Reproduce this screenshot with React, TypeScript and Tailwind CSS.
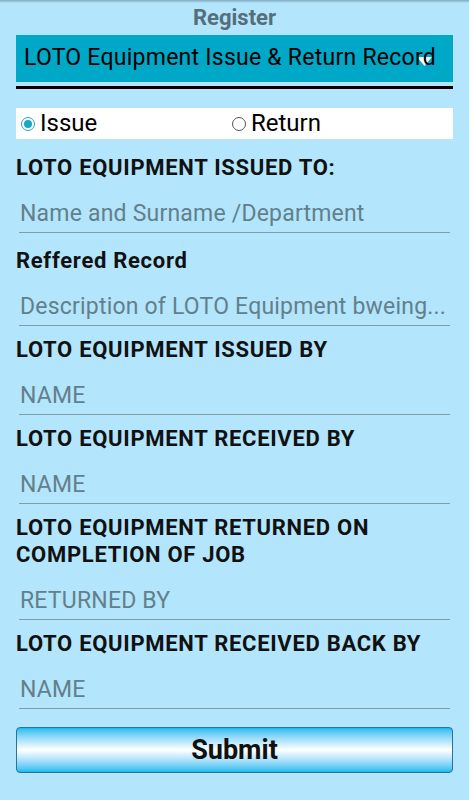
import { useState } from 'react'

const fields = [
  { label: ['LOTO EQUIPMENT ISSUED TO:'], placeholder: 'Name and Surname /Department', mt: 'mt-0' },
  { label: ['Reffered Record'], placeholder: 'Description of LOTO Equipment bweing...', mt: 'mt-[14px]' },
  { label: ['LOTO EQUIPMENT ISSUED BY'], placeholder: 'NAME', mt: 'mt-[10px]' },
  { label: ['LOTO EQUIPMENT RECEIVED BY'], placeholder: 'NAME', mt: 'mt-[10px]' },
  { label: ['LOTO EQUIPMENT RETURNED ON', 'COMPLETION OF JOB'], placeholder: 'RETURNED BY', mt: 'mt-[10px]' },
  { label: ['LOTO EQUIPMENT RECEIVED BACK BY'], placeholder: 'NAME', mt: 'mt-[10px]' },
]

function Radio({ checked, label, onClick }: { checked: boolean; label: string; onClick: () => void }) {
  return (
    <button onClick={onClick} className="flex items-center gap-[5px] text-[24px] leading-[31px] text-black">
      <span
        className={`w-[14px] h-[14px] rounded-full border flex items-center justify-center ${
          checked ? 'border-[#1aa6c4]' : 'border-[#555]'
        }`}
      >
        {checked && <span className="w-[8px] h-[8px] rounded-full bg-[#1aa6c4]" />}
      </span>
      {label}
    </button>
  )
}

export default function App() {
  const [mode, setMode] = useState<'issue' | 'return'>('issue')

  return (
    <div
      className="w-[469px] h-[800px] bg-[#b3e5fc] overflow-hidden"
      style={{ fontFamily: 'Roboto, "Noto Sans", sans-serif' }}
    >
      <div className="h-[3px] bg-gradient-to-b from-[#7fa9bb] to-[#b3e5fc]" />
      <div className="h-[28px] flex items-center justify-center text-[22px] font-bold text-[#546e7a]">Register</div>

      <div className="mx-[16px] mt-[4px]">
        <div className="relative h-[47px] bg-[#00a8c8] flex items-center pl-[8px] text-[23px] tracking-[0.25px] text-black whitespace-nowrap overflow-hidden">
          <svg className="absolute left-[401px] top-[22px]" width="15" height="10" viewBox="0 0 15 10">
            <path d="M0 0 L15 0 L7.5 9 Z" fill="#fff" />
          </svg>
          <span className="relative">LOTO Equipment Issue &amp; Return Record</span>
        </div>
        <div className="h-[3px] bg-black mt-[4px]" />
      </div>

      <div className="mx-[16px] mt-[19px] h-[31px] bg-white flex items-center pl-[5px]">
        <div className="w-[211px]">
          <Radio checked={mode === 'issue'} label="Issue" onClick={() => setMode('issue')} />
        </div>
        <Radio checked={mode === 'return'} label="Return" onClick={() => setMode('return')} />
      </div>

      <div className="px-[16px] mt-[15px]">
        {fields.map((f) => (
          <div key={f.label[0]} className={f.mt}>
            <div className="text-[22px] leading-[27px] font-bold tracking-[0.7px] text-[#111] whitespace-nowrap">
              {f.label.map((line) => (
                <div key={line}>{line}</div>
              ))}
            </div>
            <div className="mx-[3px] mt-[19px] border-b border-[#7f9ea9] pb-[4px] pl-[1px]">
              <input
                className="w-full h-[28px] bg-transparent outline-none text-[23px] leading-[28px] tracking-[0.2px] text-[#333] placeholder:text-[#62808b]"
                placeholder={f.placeholder}
              />
            </div>
          </div>
        ))}
      </div>

      <div className="px-[16px] mt-[18px]">
        <button className="w-full h-[46px] rounded-[4px] border border-[#2a7490] bg-gradient-to-b from-[#00bcf2] via-white to-[#00bcf2] text-[27px] font-bold text-[#111]">
          Submit
        </button>
      </div>
    </div>
  )
}
